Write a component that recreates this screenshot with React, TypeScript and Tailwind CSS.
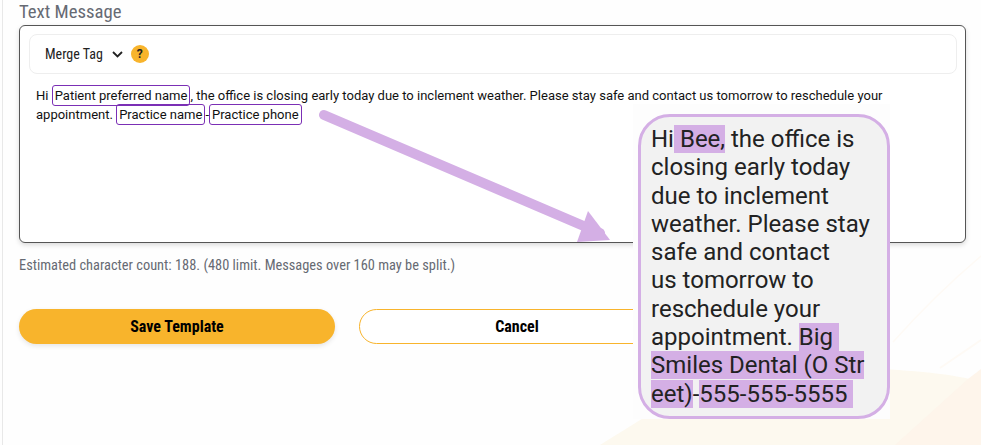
const Tag = ({ children }: { children: React.ReactNode }) => (
  <span className="rounded-[3px] border border-[#7b2fb5] px-[2px] py-[2px]">{children}</span>
);

const Mark = ({ children }: { children: React.ReactNode }) => (
  <span className="bg-[#d4afe5]">{children}</span>
);

export default function App() {
  return (
    <div className="relative h-[445px] w-[981px] overflow-hidden bg-[#fefefe] font-['Roboto',sans-serif]">
      <svg className="absolute inset-0" width="981" height="445" viewBox="0 0 981 445" fill="none">
        <path d="M600 445 C650 415 700 375 790 370 C860 366 930 370 970 379 L981 385 L981 445 Z" fill="#fdf9ef" />
        <path d="M895 445 L968 379 L981 369 L981 445 Z" fill="#fef5eb" />
        <path d="M893 342 Q935 295 981 256" stroke="#fefaf5" strokeWidth="1.5" />
        <path d="M940 368 L981 340" stroke="#fefaf5" strokeWidth="2" />
        <path d="M912 144 L918 152 L928 143 L937 152 L946 143 L953 152" stroke="#fef4e8" strokeWidth="3" />
      </svg>
      <div className="absolute bottom-0 left-[2px] top-0 w-px bg-[#e8e8e8]" />

      <div className="relative flex w-[966px] flex-col pl-[19px]">
        <h2 className="h-[25px] text-[18.7px] leading-[24px] font-normal text-[#666a73] [font-stretch:75%]">Text Message</h2>
        <div className="flex h-[218px] flex-col rounded-[6px] border border-[#555] bg-white pl-[9px] pr-[8px] pt-[8px] shadow-[0_2px_5px_rgba(0,0,0,0.15)]">
          <div className="flex h-[40px] items-center rounded-[8px] border border-[#eeeeee] pl-[15px]">
            <span className="text-[14px] text-[#222] [font-stretch:75%]">Merge Tag</span>
            <svg className="ml-[9px]" width="11" height="7" viewBox="0 0 11 7" fill="none">
              <path d="M1 1 L5.5 5.5 L10 1" stroke="#222" strokeWidth="1.8" />
            </svg>
            <span className="ml-[8px] flex h-[18px] w-[18px] items-center justify-center rounded-full bg-[#f8b42c] text-[12px] font-bold text-[#222]">?</span>
          </div>
          <div className="px-[7px] pt-[12px] font-['Roboto',sans-serif] text-[13.03px] leading-[19px] text-[#111]">
            Hi <Tag>Patient preferred name</Tag>, the office is closing early today due to inclement weather. Please stay safe and contact us tomorrow to reschedule your appointment. <Tag>Practice name</Tag>-<Tag>Practice phone</Tag>
          </div>
        </div>
        <p className="mt-[14px] text-[14.4px] leading-[18px] text-[#666a73] [font-stretch:75%]">
          Estimated character count: 188. (480 limit. Messages over 160 may be split.)
        </p>
        <div className="mt-[34px] flex gap-[24px]">
          <button className="h-[35px] w-[316px] rounded-full bg-[#f8b42c] text-[16px] font-bold text-black shadow-[0_2px_5px_rgba(0,0,0,0.1)] [font-stretch:75%]">
            Save Template
          </button>
          <button className="h-[35px] w-[316px] rounded-full border border-[#f8b42c] bg-white text-[16px] font-bold text-black [font-stretch:75%]">
            Cancel
          </button>
        </div>
      </div>

      <svg className="absolute left-[315px] top-[108px]" width="305" height="135" viewBox="0 0 305 135" fill="none">
        <path d="M9 7 L285 125" stroke="#d4afe5" strokeWidth="10" strokeLinecap="round" />
        <path d="M273 103 L295 132 L262 134 Z" fill="#d4afe5" />
      </svg>

      <div className="absolute left-[633px] top-[104px] h-[315px] w-[257px] bg-[#fdfdfd] pl-[5px] pt-[10px]">
        <div className="h-[305px] w-[252px] rounded-[32px] border-[3px] border-[#d4afe5] bg-[#f2f2f2] pl-[10px] pt-[8px] text-[24px] leading-[28.3px] text-[#222]">
          Hi<Mark> Bee,</Mark> the office is<br />
          closing early today<br />
          due to inclement<br />
          weather. Please stay<br />
          safe and contact<br />
          us tomorrow to<br />
          reschedule your<br />
          appointment. <Mark>Big&nbsp;</Mark><br />
          <Mark>Smiles Dental (O Str</Mark><br />
          <Mark>eet)</Mark>-<Mark>555-555-5555&nbsp;</Mark>
        </div>
      </div>
    </div>
  );
}
